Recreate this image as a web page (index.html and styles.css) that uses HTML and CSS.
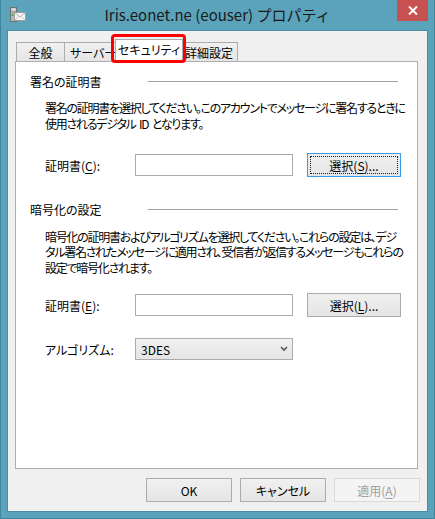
FILE: index.html
```html
<!DOCTYPE html>
<html lang="ja">
<head>
<meta charset="utf-8">
<title>Iris.eonet.ne (eouser) プロパティ</title>
<link rel="stylesheet" href="styles.css">
</head>
<body>
<div class="window">
  <div class="titlebar">
    <div class="tb-side">
      <svg class="app-icon" width="16" height="16" viewBox="0 0 16 16">
        <rect x="0.5" y="0.5" width="6" height="14" fill="#b9b9b9" stroke="#6f6f6f"/>
        <rect x="1.5" y="1.5" width="4" height="2" fill="#e6e6e6"/>
        <rect x="1.5" y="4.5" width="4" height="1" fill="#8c8c8c"/>
        <rect x="1.5" y="7" width="2" height="2" fill="#4caf50"/>
        <rect x="4.5" y="5.5" width="11" height="8" fill="#f6f6f6" stroke="#9c9c9c"/>
        <path d="M4.5 5.5 L10 10 L15.5 5.5" fill="none" stroke="#b4b4b4"/>
        <path d="M4.5 13.5 L8.5 9.5 M15.5 13.5 L11.5 9.5" fill="none" stroke="#c8c8c8"/>
      </svg>
    </div>
    <div class="title">Iris.eonet.ne (eouser) プロパティ</div>
    <div class="tb-side tb-right">
      <div class="close">
        <svg width="10" height="9" viewBox="0 0 10 9"><path d="M1 0.5 L9 8.5 M9 0.5 L1 8.5" stroke="#fff" stroke-width="2"/></svg>
      </div>
    </div>
  </div>
  <div class="client">
    <div class="tabs">
      <div class="tab t1">全般</div>
      <div class="tab t2">サーバー</div>
      <div class="tab t3 selected">セキュリティ</div>
      <div class="tab t4">詳細設定</div>
      <div class="highlight"></div>
    </div>
    <div class="panel">
      <div class="group-head first"><span class="group-label">署名の証明書</span><span class="rule"></span></div>
      <p class="desc d1">署名の証明書を選択してください。このアカウントでメッセージに署名するときに<br>使用されるデジタル ID となります。</p>
      <div class="field-row r1">
        <span class="flabel">証明書(<u>C</u>):</span>
        <div class="textbox"></div>
        <div class="btn pick focused"><span class="focus-rect">選択(<u>S</u>)...</span></div>
      </div>

      <div class="group-head second"><span class="group-label">暗号化の設定</span><span class="rule"></span></div>
      <p class="desc d2">暗号化の証明書およびアルゴリズムを選択してください。これらの設定は、デジ<br>タル署名されたメッセージに適用され、受信者が返信するメッセージもこれらの<br>設定で暗号化されます。</p>
      <div class="field-row r2">
        <span class="flabel">証明書(<u>E</u>):</span>
        <div class="textbox"></div>
        <div class="btn pick">選択(<u>L</u>)...</div>
      </div>
      <div class="field-row r3">
        <span class="flabel">アルゴリズム:</span>
        <div class="combo">
          <span class="combo-value">3DES</span>
          <svg class="chev" width="8" height="6" viewBox="0 0 8 6"><path d="M1 1 L4 4 L7 1" fill="none" stroke="#555" stroke-width="1.6"/></svg>
        </div>
      </div>
    </div>
    <div class="buttons">
      <div class="btn dlg">OK</div>
      <div class="btn dlg">キャンセル</div>
      <div class="btn dlg disabled">適用(<u>A</u>)</div>
    </div>
  </div>
</div>
</body>
</html>
```

FILE: styles.css
```css
* { box-sizing: border-box; }
html, body { margin: 0; padding: 0; }
body {
  width: 435px;
  height: 519px;
  overflow: hidden;
  font-family: "Noto Sans CJK JP", "Noto Sans", sans-serif;
  font-size: 12px;
  color: #000;
  font-feature-settings: "palt";
}
.window {
  width: 435px;
  height: 519px;
  background: #5aa3bb;
  border: 1px solid #3f869d;
  border-top: none;
  padding: 0 6px 6px 6px;
  display: flex;
  flex-direction: column;
}
.titlebar {
  height: 30px;
  display: grid;
  grid-template-columns: 1fr auto 1fr;
  align-items: start;
}
.tb-side { display: flex; }
.tb-right { justify-content: flex-end; }
.app-icon { margin: 7px 0 0 3px; }
.title {
  font-size: 15px;
  line-height: 20px;
  padding-top: 5px;
  color: #1a1a1a;
  white-space: nowrap;
  font-feature-settings: normal;
}
.close {
  width: 31px;
  height: 21px;
  background: #c75050;
  display: flex;
  align-items: center;
  justify-content: center;
}
.client {
  flex: 1;
  background: #f0f0f0;
  border: 1px solid #4a8ea5;
  padding: 9px 9px 0 7px;
  display: flex;
  flex-direction: column;
}
.tabs {
  position: relative;
  height: 21px;
  display: flex;
  align-items: flex-end;
}
.tab {
  height: 19px;
  border: 1px solid #acacac;
  border-bottom: none;
  background: linear-gradient(#f0f0f0, #e5e5e5);
  line-height: 16px;
  padding-top: 2px;
  white-space: nowrap;
  overflow: hidden;
  text-align: center;
}
.t1 { width: 49px; margin-left: 1px; }
.t2 { width: 54px; margin-left: -1px; text-align: left; padding-left: 5px; }
.t3 { width: 68px; margin-left: -3px; }
.t4 { width: 58px; margin-left: -3px; text-align: right; padding-right: 4px; }
.tab.selected {
  position: relative;
  z-index: 2;
  height: 23px;
  margin-bottom: -1px;
  background: #fff;
  padding-top: 2px;
}
.highlight {
  position: absolute;
  left: 96px;
  top: -6px;
  width: 75px;
  height: 29px;
  border: 3px solid #f00;
  border-radius: 4px;
  z-index: 3;
}
.panel {
  height: 408px;
  background: #fff;
  border: 1px solid #adadad;
  padding: 12px 16px 0 14px;
}
.group-head {
  display: flex;
  align-items: center;
  height: 16px;
  line-height: 16px;
}
.group-label { width: 118px; white-space: nowrap; }
.rule {
  flex: 1;
  height: 1px;
  background: #a0a0a0;
  margin-right: 3px;
  margin-top: -1px;
}
.group-head.second { margin-top: 25px; }
.desc {
  margin: 10px 0 0 15px;
  line-height: 15.5px;
  white-space: nowrap;
  letter-spacing: -1.25px;
  word-spacing: 2px;
}
.desc.d2 { margin-top: 10.5px; }
.field-row {
  display: flex;
  align-items: center;
  height: 24px;
  margin-left: 15px;
}
.r1 { margin-top: 22px; }
.r2 { margin-top: 18px; }
.r3 { margin-top: 20px; }
.flabel { width: 90px; white-space: nowrap; }
.textbox {
  width: 158px;
  height: 22px;
  background: #fff;
  border: 1px solid #acacac;
}
.btn {
  height: 24px;
  border: 1px solid #acacac;
  background: linear-gradient(#f0f0f0, #e5e5e5);
  display: flex;
  align-items: center;
  justify-content: center;
  white-space: nowrap;
}
.pick { width: 94px; margin-left: 14px; }
.btn.focused {
  border-color: #3c9be8;
  padding: 2px;
}
.focus-rect {
  flex: 1;
  align-self: stretch;
  display: flex;
  align-items: center;
  justify-content: center;
  outline: 1px dotted #222;
  outline-offset: -1px;
}
.combo {
  width: 158px;
  height: 22px;
  border: 1px solid #acacac;
  background: linear-gradient(#f0f0f0, #e5e5e5);
  display: flex;
  align-items: center;
  justify-content: space-between;
  padding: 0 4px 0 5px;
}
.combo-value { font-feature-settings: normal; }
.buttons {
  display: flex;
  justify-content: flex-end;
  gap: 8px;
  margin-top: 9px;
  margin-right: -2px;
}
.btn.dlg { width: 86px; }
.btn.disabled {
  color: #a0a0a0;
  border-color: #d9d9d9;
  background: #f4f4f4;
}
u { text-underline-offset: 2px; }
```
